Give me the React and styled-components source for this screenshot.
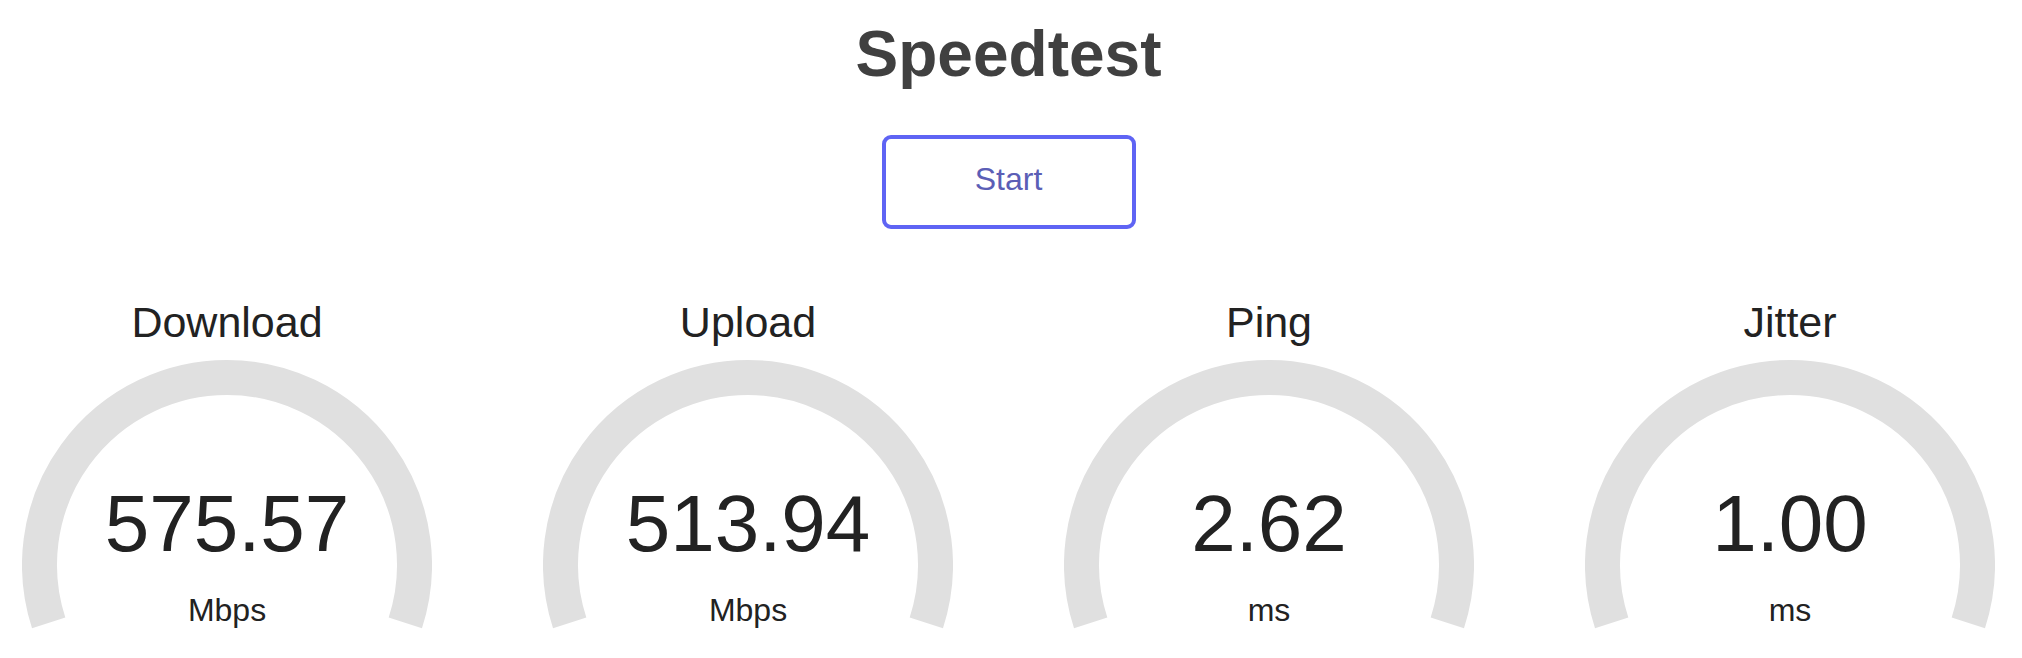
import React from "react";
import styled, { createGlobalStyle } from "styled-components";

const GlobalStyle = createGlobalStyle`
    body {
        margin: 0;
        background: #ffffff;
        font-family: "Liberation Sans", Arial, Helvetica, sans-serif;
    }
`;

const Page = styled.div`
    display: flex;
    flex-direction: column;
    align-items: center;
    padding: 22px 5px 0 0;
`;

const Title = styled.h1`
    margin: 0;
    font-size: 64px;
    line-height: 64px;
    font-weight: 700;
    color: #404040;
`;

const StartButton = styled.button`
    margin-top: 49px;
    width: 254px;
    height: 94px;
    box-sizing: border-box;
    border: 4px solid #5f64f4;
    border-radius: 9px;
    background: #ffffff;
    color: #5b5eb6;
    font-family: "Liberation Sans", Arial, Helvetica, sans-serif;
    font-size: 32px;
    padding: 0 0 5px;
    cursor: pointer;
`;

const GaugeRow = styled.div`
    margin-top: 72px;
    display: flex;
    justify-content: center;
    gap: 111px;
`;

const Gauge = styled.div`
    width: 410px;
    display: flex;
    flex-direction: column;
    align-items: center;
`;

const Label = styled.div`
    font-size: 43px;
    line-height: 42px;
    color: #222222;
`;

const Dial = styled.div`
    margin-top: 17px;
    display: grid;
    width: 410px;
    height: 270px;

    & > * {
        grid-area: 1 / 1;
    }
`;

const Readout = styled.div`
    display: flex;
    flex-direction: column;
    align-items: center;
    padding-top: 124px;
    color: #222222;
`;

const Value = styled.div`
    font-size: 80px;
    line-height: 80px;
`;

const Unit = styled.div`
    margin-top: 30px;
    font-size: 32px;
    line-height: 32px;
`;

// 216 degree track, open at the bottom
const R = 187.5;
const CX = 205;
const CY = 205;
const A = (18 * Math.PI) / 180;
const x1 = CX - R * Math.cos(A);
const x2 = CX + R * Math.cos(A);
const y = CY + R * Math.sin(A);
const trackPath = `M ${x1} ${y} A ${R} ${R} 0 1 1 ${x2} ${y}`;

const Arc = () => (
    <svg width="410" height="270" viewBox="0 0 410 270">
        <path d={trackPath} fill="none" stroke="#e0e0e0" strokeWidth="35" />
    </svg>
);

const results = [
    { label: "Download", value: "575.57", unit: "Mbps" },
    { label: "Upload", value: "513.94", unit: "Mbps" },
    { label: "Ping", value: "2.62", unit: "ms" },
    { label: "Jitter", value: "1.00", unit: "ms" },
];

const App = () => (
    <Page>
        <GlobalStyle />
        <Title>Speedtest</Title>
        <StartButton>Start</StartButton>
        <GaugeRow>
            {results.map((r) => (
                <Gauge key={r.label}>
                    <Label>{r.label}</Label>
                    <Dial>
                        <Arc />
                        <Readout>
                            <Value>{r.value}</Value>
                            <Unit>{r.unit}</Unit>
                        </Readout>
                    </Dial>
                </Gauge>
            ))}
        </GaugeRow>
    </Page>
);

export default App;
